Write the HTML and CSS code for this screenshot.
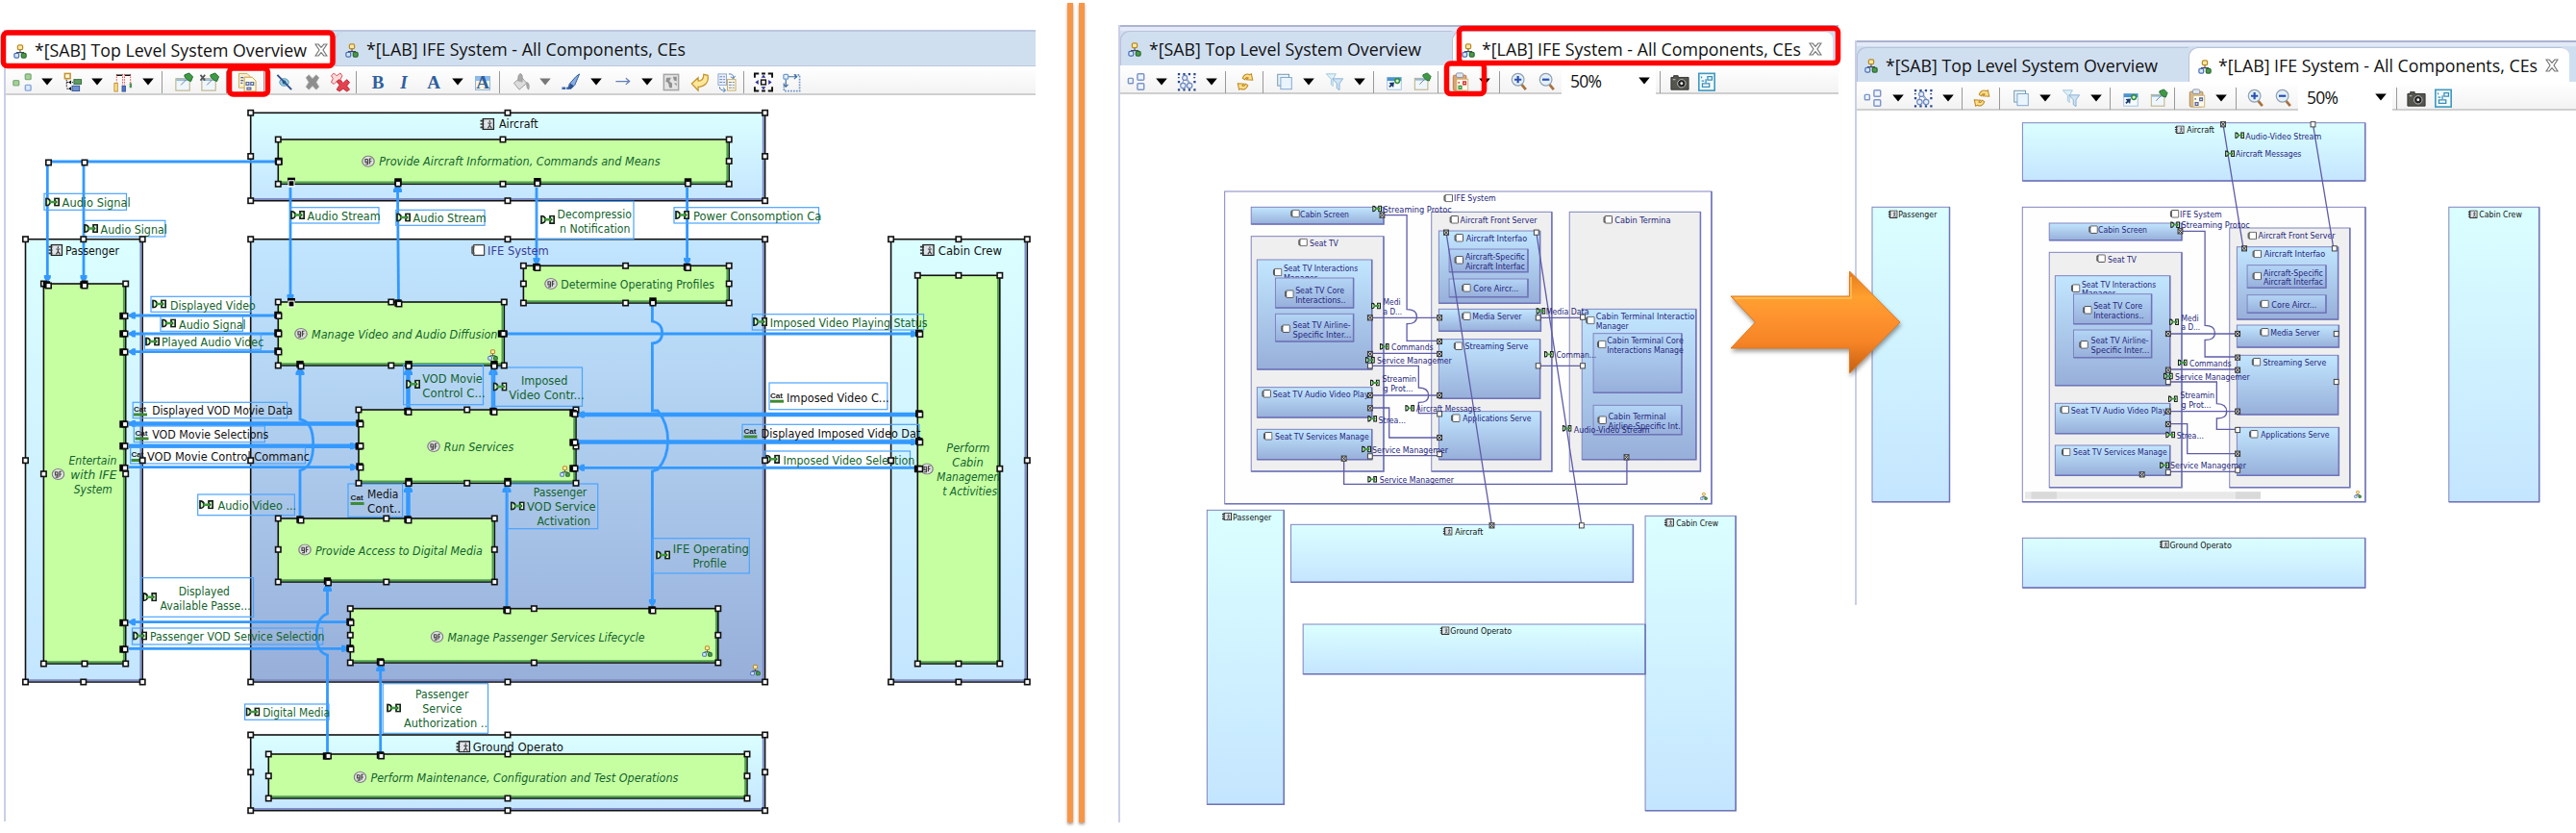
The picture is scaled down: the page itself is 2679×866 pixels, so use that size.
FILE: index.html
```html
<!DOCTYPE html>
<html lang="en">
<head>
<meta charset="utf-8">
<title>Diagram layout copy and paste</title>
<link rel="stylesheet" href="styles.css">
</head>
<body>
<svg class="sprite" aria-hidden="true">
  <defs>
    <linearGradient id="g-actor" x1="0" y1="0" x2="0" y2="1"><stop offset="0" stop-color="#dbffff"/><stop offset="1" stop-color="#c4e5ff"/></linearGradient>
    <linearGradient id="g-comp" x1="0" y1="0" x2="0" y2="1"><stop offset="0" stop-color="#c2e6ff"/><stop offset="1" stop-color="#97afd9"/></linearGradient>
    <linearGradient id="g-sub" x1="0" y1="0" x2="0" y2="1"><stop offset="0" stop-color="#b4d6f6"/><stop offset="1" stop-color="#97afdb"/></linearGradient>
    <linearGradient id="g-arrow" x1="0" y1="0" x2="0" y2="1"><stop offset="0" stop-color="#e8781a"/><stop offset=".25" stop-color="#ffa02f"/><stop offset=".4" stop-color="#ff9630"/><stop offset=".7" stop-color="#f68426"/><stop offset="1" stop-color="#c55f10"/></linearGradient>
    <marker id="tip" viewBox="0 0 8 8" refX="7" refY="4" markerWidth="8" markerHeight="8" markerUnits="userSpaceOnUse" orient="auto"><path d="M0 .5H3L8 4L3 7.5H0Z" fill="#3399ff"/></marker>
  </defs>
  <symbol id="i-tree" viewBox="0 0 16 16" preserveAspectRatio="none"><path d="M8 6v4M4 11V9h8v2" fill="none" stroke="#445" stroke-width="1.2"/><rect x="5" y="1" width="6" height="5" rx="1.5" fill="#ffe9a8" stroke="#b98a1e" stroke-width="1.4"/><rect x="1" y="10" width="5.5" height="5" rx="1.5" fill="#d5e6fa" stroke="#4a70b5" stroke-width="1.4"/><rect x="9.5" y="10" width="5.5" height="5" rx="1.5" fill="#4c9a4c" stroke="#2d6b2f" stroke-width="1.4"/></symbol>
  <symbol id="i-close" viewBox="0 0 14 14"><path d="M1 1h3.2L7 4.4 9.8 1H13L9 7l4 6H9.800L7 9.600 4.200 13H1L5 7Z" fill="#fff" stroke="#777" stroke-width="1.2"/></symbol>
  <symbol id="i-caret" viewBox="0 0 12 20"><path d="M0.200 6.500h11.600L6 13.500Z"/></symbol>
  <symbol id="i-nodes" viewBox="0 0 22 22"><g stroke-width="1.500"><rect x="1.500" y="9" width="6" height="5.500" rx="1" fill="#a8d09a" stroke="#7eb07a"/><rect x="14.500" y="2" width="6" height="6" rx="1" fill="#a8d09a" stroke="#7eb07a"/><rect x="14.500" y="14" width="6" height="6" rx="1" fill="#dce9fa" stroke="#86a7da"/></g></symbol>
  <symbol id="i-nodes2" viewBox="0 0 22 22"><g fill="#eef4fd" stroke="#7d96c8" stroke-width="1.600"><rect x="1.500" y="7" width="5.500" height="6" rx="1"/><rect x="12" y="2" width="7.500" height="7" rx="1"/><rect x="12" y="13" width="7.500" height="7" rx="1"/></g></symbol>
  <symbol id="i-hier" viewBox="0 0 22 22"><path d="M5 8v9M5 11h7M5 18h7" fill="none" stroke="#222" stroke-dasharray="2 1"/><path d="M7 11l3-2v4zM7 18l3-2v4z"/><rect x="3" y="1.500" width="6" height="5.500" fill="#fff8dc" stroke="#c3922d" stroke-width="1.600"/><rect x="13" y="8" width="8" height="5" fill="#5d9c61" stroke="#356e3b"/><rect x="11" y="15" width="8" height="5.500" fill="#6e93cf" stroke="#34539a"/></symbol>
  <symbol id="i-align" viewBox="0 0 22 22"><path d="M4 2v9M10.500 2v12M12.500 2v12M19 2v10" stroke="#f04040" stroke-dasharray="1.600 1.200"/><path d="M4 3.500h6M13 3.500h6" stroke="#111" stroke-width="1.600"/><rect x="1.500" y="12" width="3.500" height="9" fill="#ffe08a" stroke="#c09030"/><rect x="10" y="15" width="3.500" height="6" fill="#5578c5" stroke="#34539a"/><rect x="18" y="12" width="2.500" height="5" fill="#4d9350"/></symbol>
  <symbol id="i-pin" viewBox="0 0 22 22"><rect x="2.500" y="7" width="15" height="13" fill="#eef7fd" stroke="#b9a777"/><path d="M3 8.500h14" stroke="#8cb9df" stroke-width="2"/><path d="M8 14l6-6" stroke="#778"/><path d="M12 3l5-2 4 4-2 5-3-1-4-4z" fill="#3f9a45" stroke="#1d6b29"/></symbol>
  <symbol id="i-unpin" viewBox="0 0 22 22"><use href="#i-pin"/><path d="M1 3l5 6M6 3L1 9" stroke="#555" stroke-width="1.800"/></symbol>
  <symbol id="i-copy" viewBox="0 0 22 22"><path d="M2 1.500h9l3 3V17H2Z" fill="#f6efcf" stroke="#cda94f"/><path d="M8 5.500h8.500l4 4V21H8Z" fill="#fdf9e4" stroke="#c99f3d"/><path d="M4 6h3M4 9h3M4 12h2M10 11h3v3h-3zM15 11h3v3h-3zM11 17h4v2h-4z" fill="none" stroke="#5268a8" stroke-width="1.300"/></symbol>
  <symbol id="i-hide" viewBox="0 0 22 22"><ellipse cx="10.500" cy="11" rx="5" ry="4" fill="#9bd0e0" stroke="#5797b5"/><circle cx="10.500" cy="11" r="2" fill="#24617e"/><path d="M3 3l15.500 16" stroke="#2f4f93" stroke-width="2"/></symbol>
  <symbol id="i-x" viewBox="0 0 22 22"><path d="M4 6l3-3 4 4 4-4 3 3-3 5 3 5-3 3-4-4-4 4-3-3 3-5Z" fill="#8e8e8e" stroke="#a8a8a8"/></symbol>
  <symbol id="i-xx" viewBox="0 0 22 22"><path d="M1 4l3-3 3 3 4-3 2 3-2 4 2 3-3 2-3-3-3 3-3-2 2-4Z" fill="#fbdada" stroke="#d8454f"/><path d="M7 10l3-2 4 4 4-4 3 3-3 4 3 4-3 2-4-3-4 3-3-2 3-5Z" fill="#e2434e" stroke="#bf2b38"/></symbol>
  <symbol id="i-bucket" viewBox="0 0 22 22"><path d="M3 12l8-7 6 7-8 7Z" fill="#dcdcdc" stroke="#999"/><path d="M8 10c-1-6 1-9 3-8s1 6 1 9M17 11c3 1 3 5 2 8-2-2-2-4-2-8" fill="#aaa" stroke="#999"/></symbol>
  <symbol id="i-brush" viewBox="0 0 22 22"><path d="M1 17.500h4M6 18l3-1" stroke="#3a6ab0" stroke-width="2.500"/><path d="M20 2l-5 12-4 4H8l1-5 7-8Z" fill="#87aede" stroke="#2f5c9e"/><path d="M10 12l4 3-3 3H8z" fill="#2c5490"/></symbol>
  <symbol id="i-line" viewBox="0 0 22 22"><path d="M3 10h15M14 6.500l4 3.500-4 3.500" fill="none" stroke="#5e7fb8" stroke-width="1.300"/></symbol>
  <symbol id="i-pic" viewBox="0 0 22 22"><rect x="3" y="2.500" width="16" height="17" fill="#e4e4e4" stroke="#a5a5a5" stroke-width="1.600"/><path d="M6 6h5l-2 4 3 2v5H9l-1-5-3-2zM13 5h4v5l-3-1zM14 12h3v3z" fill="#909090"/></symbol>
  <symbol id="i-back" viewBox="0 0 22 22"><path d="M2 12.500L9 6v3.500c4 0 6-2 6-7l4.500 1C21 11 16 16 9 16v4Z" fill="#ffe79a" stroke="#c4932e" stroke-width="1.300"/></symbol>
  <symbol id="i-fmt" viewBox="0 0 22 22"><rect x="1.500" y="2" width="9" height="12" fill="#edf2fb" stroke="#8ea5cc"/><rect x="11.500" y="8" width="9" height="12" fill="#fff8df" stroke="#c2ab6a"/><path d="M3 5h6M3 8h6M3 11h6M13 11h6M13 14h6M13 17h6" stroke="#5d7fc0" stroke-dasharray="3 1"/><path d="M13 2c4 0 5 1 5 5M15 5l3 2 2-3M3 16c0 3 2 4 6 4M7 17l2.500 3L7 22" fill="none" stroke="#4277b8"/></symbol>
  <symbol id="i-auto" viewBox="0 0 22 22"><path d="M1.500 6V1.500H6M9 1.500h4M16 1.500h4.500V6M20.500 16v4.500H16M13 20.500H9M6 20.500H1.500V16" fill="none" stroke="#111" stroke-width="2"/><rect x="8.500" y="8.500" width="5" height="5" fill="#fff" stroke="#111" stroke-width="1.500"/><path d="M11 3l2.500 3h-5zM11 19l2.500-3h-5zM2 11l3.500-2.500v5zM20 11l-3.500-2.500v5z" fill="#2b2b9a"/></symbol>
  <symbol id="i-snap" viewBox="0 0 22 22"><path d="M3 12v8.500h17V3h-6" fill="none" stroke="#6f97c6" stroke-width="1.800" stroke-dasharray="1.800 1.300"/><rect x="2.500" y="2.500" width="5" height="5" rx="1" fill="#e4effb" stroke="#6b9ccc" stroke-width="1.300"/><path d="M8 5h9M14 2.500l3 2.500-3 2.500M5 8v8M2.500 13.500L5 16l2.500-2.500" fill="none" stroke="#3b6b9b" stroke-width="1.200"/></symbol>
  <symbol id="i-net" viewBox="0 0 22 22"><g fill="#27488c"><path d="M1 1h2.500v2.500H1zM7 1h2.500v2.500H7zM13 1h2.500v2.500H13zM19 1h2.500v2.500H19zM1 10h2.500v2.500H1zM19 10h2.500v2.500H19zM1 19h2.500v2.500H1zM7 19h2.500v2.500H7zM13 19h2.500v2.500H13zM19 19h2.500v2.500H19zM1 5.500h2V7H1zM19 5.500h2V7h-2z"/></g><path d="M8 7L6 14M9 7l7 8M11 7l6 8" stroke="#6985b8"/><g fill="#e7effb" stroke="#6e89c0" stroke-width="1.300"><circle cx="9" cy="6.500" r="2.800"/><circle cx="7" cy="15.500" r="3"/><circle cx="14.500" cy="15.500" r="3"/></g></symbol>
  <symbol id="i-refresh" viewBox="0 0 22 22"><path d="M8 7c1-4 5-6 8-4l2-1 1.500 7-7-.5 2-2c-2-1-3 0-4 2ZM14 15c-1 4-5 6-8 4l-2 1L2.500 13l7 .5-2 2c2 1 3 0 4-2Z" fill="#ffe08c" stroke="#c08a24" stroke-width="1.200"/></symbol>
  <symbol id="i-layers" viewBox="0 0 22 22"><rect x="3" y="2.500" width="13" height="13" fill="#eaf2f4" stroke="#6b93a8"/><rect x="6.500" y="6" width="12.500" height="13.500" fill="#e9f5fc" stroke="#7ba0ce"/></symbol>
  <symbol id="i-filter" viewBox="0 0 22 22"><path d="M1.500 2h11L9 8v8l-2-2V8Z" fill="#dff1f7" stroke="#9cc3dc"/><path d="M8.500 7.500h12L16.500 13v7.500l-3-2V13Z" fill="#cfe5f5" stroke="#86acd3"/></symbol>
  <symbol id="i-img" viewBox="0 0 22 22"><rect x="3" y="6" width="16" height="14" fill="#f8fbff" stroke="#9ec1de"/><path d="M3 6h16v4H3z" fill="#4a93cf"/><path d="M5 12l6-.500-1 6-1.800-1.800-2 2-1.500-1.500 2-2Z" fill="#1c3c70"/><circle cx="14.500" cy="10" r="2.600" fill="#d8f4cc" stroke="#2f8a3b" stroke-width="1.600"/></symbol>
  <symbol id="i-paste" viewBox="0 0 22 22"><rect x="2.500" y="3.500" width="15" height="17.500" rx="1.500" fill="#d8b888" stroke="#a98250"/><rect x="6" y="1" width="8" height="5" rx="1.500" fill="#dfe6ee" stroke="#8492a8"/><rect x="6.500" y="8" width="13" height="13" fill="#fffbe9" stroke="#c9b27a"/><path d="M9 11v2M9 16h3v3H9zM14 11h3v3h-3z" fill="none" stroke="#53669e" stroke-width="1.400"/></symbol>
  <symbol id="i-paste2" viewBox="0 0 22 22"><rect x="2.500" y="3.500" width="15" height="17.500" rx="1.500" fill="#dfa36e" stroke="#b47238"/><rect x="6" y="1" width="8" height="5" rx="1.500" fill="#dfe6ee" stroke="#8492a8"/><rect x="6.500" y="8" width="13" height="13" fill="#fffbe9" stroke="#c9b27a"/><path d="M9 11v2M14 11h3v3h-3z" fill="none" stroke="#d8323a" stroke-width="1.500"/><path d="M9 16h3v3H9z" fill="none" stroke="#2e9a40" stroke-width="1.500"/></symbol>
  <symbol id="i-zin" viewBox="0 0 22 22"><path d="M13.500 14l5 6" stroke="#a9713c" stroke-width="3"/><circle cx="9.500" cy="8.500" r="7" fill="#e3f0fb" stroke="#8fa0ad" stroke-width="1.300"/><path d="M5.500 8.500h8M9.500 4.500v8" stroke="#2a4fae" stroke-width="2.400"/></symbol>
  <symbol id="i-zout" viewBox="0 0 22 22"><path d="M13.500 14l5 6" stroke="#a9713c" stroke-width="3"/><circle cx="9.500" cy="8.500" r="7" fill="#e3f0fb" stroke="#8fa0ad" stroke-width="1.300"/><path d="M5.500 8.500h8" stroke="#2a4fae" stroke-width="2.400"/></symbol>
  <symbol id="i-cam" viewBox="0 0 22 22"><path d="M1 6h3V4h5v2h12v14H1Z" fill="#55554f" stroke="#2e2e2e"/><circle cx="13" cy="13" r="4.600" fill="#222" stroke="#ccc"/><circle cx="13" cy="13" r="1.600" fill="#eee"/><path d="M3 8.500h3" stroke="#ccc"/></symbol>
  <symbol id="i-dia" viewBox="0 0 22 22"><rect x="2" y="1.500" width="18" height="19.500" fill="#f3fbff" stroke="#3f9abf" stroke-width="1.800"/><path d="M5 5v2M5 10h3M12 5h5v4h-5zM10 12V8M6 13h8v4H6z" fill="none" stroke="#3a8db5" stroke-width="1.400"/></symbol>
  <!-- diagram element icons -->
  <symbol id="d-port" viewBox="0 0 15 10" preserveAspectRatio="none"><path d="M1 1v8C6.500 9 6.500 1 1 1ZM14.200 1H10v2.500L11.500 5 10 6.500V9h4.200Z" fill="#d4f5c4" stroke="#15201a" stroke-width="1.700"/><path d="M4.500 5h7" stroke="#3d9a3a" stroke-width="2.600"/></symbol>
  <symbol id="d-fn" viewBox="0 0 14 14" preserveAspectRatio="none"><circle cx="7" cy="7" r="6.200" fill="#e2e2e2" stroke="#808080" stroke-width="1.300"/><path d="M6.500 4.500H4v3.500h2.500V4.500V10.500H4.200M8.500 10V4h2M8 7h2.500" fill="none" stroke="#444" stroke-width="1.200"/></symbol>
  <symbol id="d-actor" viewBox="0 0 15 13" preserveAspectRatio="none"><rect x="3" y=".8" width="11.200" height="11.400" fill="#dfe4ea" stroke="#222" stroke-width="1.400"/><path d="M0 3h4M0 6.500h4M0 10h4" stroke="#333" stroke-width="1.800"/><path d="M10 2.500v2M8 5.500h4M10 5v3l-2 3M10 8l2 3" stroke="#444" fill="none" stroke-width="1.200"/></symbol>
  <symbol id="d-comp" viewBox="0 0 15 13" preserveAspectRatio="none"><rect x="3" y=".8" width="11.200" height="11.400" rx="1" fill="#fff" stroke="#444" stroke-width="1.400"/><path d="M1 3h3M1 6.500h2M1 10h3M1.500 3v7" stroke="#555" stroke-width="1.600"/></symbol>
</svg>

<main class="stage">
  <section class="panel panel-source">
    <div class="tabs">
      <div class="tab active"><svg class="tab-icon"><use href="#i-tree"/></svg><svg class="tab-label sab"><text x="0" y="21" textLength="283" lengthAdjust="spacingAndGlyphs">*[SAB] Top Level System Overview</text></svg><svg class="tab-close"><use href="#i-close"/></svg></div>
      <div class="tab"><svg class="tab-icon"><use href="#i-tree"/></svg><svg class="tab-label lab"><text x="0" y="21" textLength="332" lengthAdjust="spacingAndGlyphs">*[LAB] IFE System - All Components, CEs</text></svg></div>
    </div>
    <div class="toolbar toolbar-edit">
      <svg class="ic"><use href="#i-nodes"/></svg><svg class="caret"><use href="#i-caret"/></svg>
      <svg class="ic"><use href="#i-hier"/></svg><svg class="caret"><use href="#i-caret"/></svg>
      <svg class="ic"><use href="#i-align"/></svg><svg class="caret"><use href="#i-caret"/></svg>
      <i class="sep"></i>
      <svg class="ic"><use href="#i-pin"/></svg><svg class="ic"><use href="#i-unpin"/></svg>
      <i class="sep"></i><svg class="ic"><use href="#i-copy"/></svg><i class="sep"></i>
      <svg class="ic"><use href="#i-hide"/></svg><svg class="ic"><use href="#i-x"/></svg><svg class="ic"><use href="#i-xx"/></svg>
      <i class="sep"></i>
      <span class="glyph bold">B</span><span class="glyph italic">I</span><span class="glyph">A</span><svg class="caret"><use href="#i-caret"/></svg><span class="glyph boxed">A</span>
      <i class="sep"></i>
      <svg class="ic"><use href="#i-bucket"/></svg><svg class="caret off"><use href="#i-caret"/></svg>
      <svg class="ic"><use href="#i-brush"/></svg><svg class="caret"><use href="#i-caret"/></svg>
      <svg class="ic"><use href="#i-line"/></svg><svg class="caret"><use href="#i-caret"/></svg>
      <svg class="ic"><use href="#i-pic"/></svg><svg class="ic"><use href="#i-back"/></svg><svg class="ic"><use href="#i-fmt"/></svg>
      <i class="sep"></i>
      <svg class="ic"><use href="#i-auto"/></svg><svg class="ic"><use href="#i-snap"/></svg>
    </div>
    <svg class="canvas" id="source" viewBox="6 99 1071 755"></svg>
  </section>

  <div class="dividers"><i></i><i></i></div>

  <section class="panel panel-target">
    <div class="tabs">
      <div class="tab"><svg class="tab-icon"><use href="#i-tree"/></svg><svg class="tab-label sab"><text x="0" y="21" textLength="283" lengthAdjust="spacingAndGlyphs">*[SAB] Top Level System Overview</text></svg></div>
      <div class="tab active"><svg class="tab-icon"><use href="#i-tree"/></svg><svg class="tab-label lab"><text x="0" y="21" textLength="332" lengthAdjust="spacingAndGlyphs">*[LAB] IFE System - All Components, CEs</text></svg><svg class="tab-close"><use href="#i-close"/></svg></div>
    </div>
    <div class="toolbar toolbar-view">
      <svg class="ic"><use href="#i-nodes2"/></svg><svg class="caret"><use href="#i-caret"/></svg>
      <svg class="ic"><use href="#i-net"/></svg><svg class="caret"><use href="#i-caret"/></svg>
      <i class="sep"></i><svg class="ic"><use href="#i-refresh"/></svg><i class="sep"></i>
      <svg class="ic"><use href="#i-layers"/></svg><svg class="caret"><use href="#i-caret"/></svg>
      <svg class="ic"><use href="#i-filter"/></svg><svg class="caret"><use href="#i-caret"/></svg>
      <i class="sep"></i>
      <svg class="ic"><use href="#i-img"/></svg><svg class="ic"><use href="#i-pin"/></svg>
      <i class="sep"></i>
      <svg class="ic"><use href="#i-paste2"/></svg><svg class="caret"><use href="#i-caret"/></svg>
      <i class="sep"></i>
      <svg class="ic"><use href="#i-zin"/></svg><svg class="ic"><use href="#i-zout"/></svg>
      <div class="zoom"><span>50%</span><svg class="caret"><use href="#i-caret"/></svg></div>
      <i class="sep"></i>
      <svg class="ic"><use href="#i-cam"/></svg><svg class="ic"><use href="#i-dia"/></svg>
    </div>
    <svg class="canvas" id="target" viewBox="1165 98 747 757"></svg>
  </section>

  <section class="panel panel-result">
    <div class="tabs">
      <div class="tab"><svg class="tab-icon"><use href="#i-tree"/></svg><svg class="tab-label sab"><text x="0" y="21" textLength="283" lengthAdjust="spacingAndGlyphs">*[SAB] Top Level System Overview</text></svg></div>
      <div class="tab active"><svg class="tab-icon"><use href="#i-tree"/></svg><svg class="tab-label lab"><text x="0" y="21" textLength="332" lengthAdjust="spacingAndGlyphs">*[LAB] IFE System - All Components, CEs</text></svg><svg class="tab-close"><use href="#i-close"/></svg></div>
    </div>
    <div class="toolbar toolbar-view">
      <svg class="ic"><use href="#i-nodes2"/></svg><svg class="caret"><use href="#i-caret"/></svg>
      <svg class="ic"><use href="#i-net"/></svg><svg class="caret"><use href="#i-caret"/></svg>
      <i class="sep"></i><svg class="ic"><use href="#i-refresh"/></svg><i class="sep"></i>
      <svg class="ic"><use href="#i-layers"/></svg><svg class="caret"><use href="#i-caret"/></svg>
      <svg class="ic"><use href="#i-filter"/></svg><svg class="caret"><use href="#i-caret"/></svg>
      <i class="sep"></i>
      <svg class="ic"><use href="#i-img"/></svg><svg class="ic"><use href="#i-pin"/></svg>
      <i class="sep"></i>
      <svg class="ic"><use href="#i-paste"/></svg><svg class="caret"><use href="#i-caret"/></svg>
      <i class="sep"></i>
      <svg class="ic"><use href="#i-zin"/></svg><svg class="ic"><use href="#i-zout"/></svg>
      <div class="zoom"><span>50%</span><svg class="caret"><use href="#i-caret"/></svg></div>
      <i class="sep"></i>
      <svg class="ic"><use href="#i-cam"/></svg><svg class="ic"><use href="#i-dia"/></svg>
    </div>
    <svg class="canvas" id="result" viewBox="1931 115 748 514"></svg>
  </section>
</main>

<svg class="overlay" viewBox="0 0 2679 866">
  <g class="callout">
    <rect x="3.500" y="34" width="342.500" height="34.500" rx="4"/>
    <rect x="238.500" y="71" width="40" height="27" rx="4"/>
    <rect x="1517.500" y="29.500" width="394" height="36" rx="4"/>
    <rect x="1504.500" y="66" width="39" height="31.500" rx="4"/>
  </g>
  <path class="big-arrow" d="M1800 308H1923.500V282L1976 335L1923.500 388V362H1800L1825.500 335Z"/>
  <path class="shine" d="M1804 310H1925V288"/>
</svg>
<script src="diagram.js"></script>
</body>
</html>
```
FILE: styles.css
```css
body {
  margin: 0;
  background: #fff;
  width: 2679px;
  height: 866px;
  overflow: hidden;
  position: relative;
  font-family: "Open Sans", "Noto Sans", sans-serif;
}
.sprite { position: absolute; width: 0; height: 0; }
.stage { display: flex; align-items: flex-start; }

.panel { display: flex; flex-direction: column; flex: none; box-sizing: border-box; border-left: 2px solid #c9cfe8; background: #fff; }
.panel-source { width: 1073px; height: 823px; margin: 31px 0 0 4px; }
.panel-target { width: 749px; height: 829px; margin: 26px 0 0 35px; }
.panel-result { width: 750px; height: 587px; margin: 42px 0 0 17px; }

.tabs { display: flex; flex: none; box-sizing: border-box; height: 42px; border-top: 2px solid #abb3d0; padding-top: 4px; background: linear-gradient(#e3e9f6 4px, #d0dff0 4px); }
.panel-source .tabs { height: 38px; padding-top: 0; border-top-color: #bcc7e0; background: #d0dfef; border-bottom: 1px solid #b9c6de; }
.panel-result .tabs { height: 43px; padding-top: 5px; }
.tab { display: flex; align-items: center; box-sizing: border-box; padding-left: 8px; width: 345px; border-top-left-radius: 9px; box-shadow: inset 1px 1px #b9c1dc; }
.tab.active { background: #fff; width: 396px; padding-left: 10px; border-top-right-radius: 9px; }
.panel-source .tab { box-shadow: none; width: auto; padding-left: 9px; border-left: 2px solid #c2cce2; height: 35px; }
.panel-source .tab.active { width: 342px; height: 36px; padding-left: 8px; border: 0; border-radius: 0; }
.tab-icon { width: 14px; height: 15px; margin: 4px 8px 0 0; }
.tab:not(.active) .tab-icon { margin-top: 3px; }
.panel-target .active .tab-icon, .panel-result .active .tab-icon { margin-right: 7px; }
.tab-label { height: 27px; overflow: visible; font-size: 18px; fill: #111; }
.tab-label.sab { width: 283px; }
.tab-label.lab { width: 332px; }
.tab.active .tab-close { width: 14px; height: 14px; margin: 2px 0 0 8px; }

.toolbar { display: grid; flex: none; align-items: center; justify-items: start; box-sizing: border-box; height: 30px; padding: 4px 0 0 7px; border-bottom: 2px solid #cfcfcf; background: linear-gradient(#fff, #f3f3f3); }
.toolbar-edit { padding-left: 6px; grid-template-columns: 31px 21px 31px 22px 31px 20px 12px 27px 28px 11px 28px 11px 29px 29px 27px 12px 27px 31px 30px 21px 28px 12px 30px 22px 31px 23px 30px 20px 30px 28px 28px 10px 29px 22px; }
.toolbar-view { grid-template-columns: 30px 22px 30px 20px 11px 28px 13px 29px 23px 30px 20px 12px 29px 26px 14px 29px 21px 11px 29px 25px 102px 11px 28px 20px; }
.ic { width: 22px; height: 21px; }
.toolbar-view .ic { width: 20px; height: 20px; }
.caret { width: 12px; height: 20px; fill: #000; }
.caret.off { fill: #777; }
.sep { width: 1px; height: 23px; background: #999; }
.glyph { width: 22px; height: 21px; line-height: 21px; text-align: center; font: bold 19px/21px "Liberation Serif", serif; color: #2f5f9e; }
.glyph.italic { font-style: italic; }
.glyph.boxed { width: 16px; height: 15px; line-height: 14px; margin: 2px 0 0 3px; background: linear-gradient(#8cbcf0 5px, #fff6d8 5px); box-shadow: inset 0 0 0 1px #8db4e2; }
.zoom { display: flex; align-items: center; justify-content: space-between; align-self: start; box-sizing: border-box; width: 98px; height: 30px; margin-top: -4px; padding: 2px 6px 0 9px; background: #fff; font-size: 17.500px; color: #111; }
.zoom span { letter-spacing: -.8px; }

.canvas { display: block; flex: 1; min-height: 0; width: 100%; overflow: visible; }
.dividers { display: flex; flex: none; gap: 6px; margin: 3px 0 0 33px; }
.dividers i { width: 6px; height: 852px; background: #f79646; box-shadow: 0 2px 3px rgba(90, 60, 40, .5); }

.overlay { position: absolute; left: 0; top: 0; width: 2679px; height: 866px; pointer-events: none; }
.callout rect { fill: none; stroke: #f00; stroke-width: 5.500; }
.big-arrow { fill: url(#g-arrow); stroke: #e07a1c; stroke-width: 1; filter: drop-shadow(1px 3px 2px rgba(60, 60, 60, .5)); }
.shine { fill: none; stroke: #ffc15a; stroke-width: 2; opacity: .8; }

.cat { font: bold 8px "Liberation Sans", sans-serif; fill: #222; }
.cat-bar { fill: #3f8a35; }

.t { font-family: "DejaVu Sans Condensed", "DejaVu Sans", sans-serif; font-size: 12.200px; fill: #111; }
.t.small { font-size: 8.900px; }
.t.green { fill: #14632d; }
.t.it { font-style: italic; }
.t.violet { fill: #3c3c96; }
.t.ink { fill: #26267c; }
.node { stroke: #111; stroke-width: 1.600; }
.node.fn { fill: #c6ffa2; }
.node.actor { fill: url(#g-actor); }
.node.comp { fill: url(#g-comp); }
.edge-shade { fill: none; stroke-width: 2; }
.edge-shade.fn { stroke: #4f9f50; }
.edge-shade.actor, .edge-shade.comp { stroke: #7d8cc4; }
.flow { fill: none; stroke: #3399ff; stroke-width: 2.800; }
.flow.thick { stroke-width: 4.500; }
.flow-tip { fill: #3399ff; }
.label-box { fill: none; stroke: #4aa3ff; stroke-width: 1.200; }
.handle { fill: #fff; stroke: #111; stroke-width: 1.600; }
.port-block { fill: #000; }
.port-gap { fill: #fff; }
.box { stroke: #8184c0; stroke-width: 1; }
.box.white { fill: #fefefe; }
.box.grey { fill: #efefef; }
.box.actor { fill: url(#g-actor); }
.box.comp { fill: url(#g-comp); }
.box.sub { fill: url(#g-sub); }
.box-shade { fill: none; stroke: #6f74ba; stroke-width: 1.500; }
.link { fill: none; stroke: #5f5ca8; stroke-width: 1.300; }
.pin { fill: #fff; stroke: #444; stroke-width: 1; }
.pin-x { stroke: #333; stroke-width: 1; fill: #ddd; }
.scroll { fill: #e8e8e8; }
.scroll-end { fill: #d9d9d9; }
```
FILE: diagram.js
```javascript
const el = (tag, attrs, text) => {
  const n = document.createElementNS('http://www.w3.org/2000/svg', tag);
  for (const k in attrs) n.setAttribute(k, attrs[k]);
  if (text !== undefined) n.textContent = text;
  return n;
};

function icon(svg, id, x, cy, w, h) {
  svg.append(el('use', { href: '#' + id, x, y: cy - h / 2, width: w, height: h }));
}

// Exchange category icon: a "Cat" caption over a green bar.
function category(svg, x, cy) {
  svg.append(el('text', { class: 'cat', x, y: cy + 1, textLength: 13, lengthAdjust: 'spacingAndGlyphs' }, 'Cat'));
  svg.append(el('rect', { class: 'cat-bar', x, y: cy + 3, width: 14, height: 3 }));
}

// Text stretched between x1 and x2 on the given baseline.
function text(svg, s, x1, x2, y, cls) {
  svg.append(el('text', { x: x1, y, textLength: x2 - x1, lengthAdjust: 'spacingAndGlyphs', class: 't ' + cls }, s));
}

/* ---- Selected system architecture diagram ---- */
const src = document.getElementById('source');

// kind, left, top, right, bottom, middle x, middle y
const nodes = [
  ['actor', 260.7, 117.3, 795.6, 208.7, 528, 162.5],
  ['fn', 289.3, 145, 758.2, 191.3, 523, 167.5],
  ['comp', 260.7, 248.7, 795.6, 709, 528, 478.7],
  ['fn', 544.4, 276.3, 758.2, 315, 650.6, 295],
  ['fn', 289.3, 314, 524.3, 380, 406.8, 347],
  ['fn', 373, 426, 599, 502.3, 485.7, 464],
  ['fn', 289.3, 539, 514.3, 605, 401.8, 571.3],
  ['fn', 364.3, 632.7, 746.8, 689, 555.4, 660.3],
  ['actor', 260.7, 764, 795.6, 842.7, 528, 802.7],
  ['fn', 279.3, 784, 777, 830, 528, 806.7],
  ['actor', 26.5, 248.7, 148.2, 709, 86.8, 478.7],
  ['fn', 45.4, 295, 130.7, 690, 88, 492.7],
  ['actor', 926.6, 248.7, 1068.3, 709, 996.9, 478.7],
  ['fn', 954.3, 286.3, 1039.8, 690, 996.9, 487.3]
];
for (const [k, x, y, r, b] of nodes) {
  src.append(el('rect', { class: 'node ' + k, x, y, width: r - x, height: b - y }));
  src.append(el('path', { class: 'edge-shade ' + k, d: `M${x + 1} ${b - 1.8}H${r - 1.8}V${y + 1}` }));
}

// path, direction of the tip (1 end, -1 start), thick
const flows = [
  ['M290 168H49.300V293', 1], ['M87 168V293', 1],
  ['M302 195V313', 1], ['M413.500 194L414.500 313', -1],
  ['M558 195V275', 1], ['M714.600 195V275', 1],
  ['M678.400 318V334Q688.600 336 688.600 346T678.400 357V427H684Q694.600 440 694.600 458T684 488L678.400 490V630', 1],
  ['M289 328H134', 1], ['M289 347H134', 1], ['M289 365.700H134', 1],
  ['M527 347H954', 1],
  ['M312 384V436Q325.700 438 325.700 462T312 489V539', -1],
  ['M424.500 384V426', -1, 1], ['M513 384V426', -1, 1],
  ['M370 440.500H134', 1, 1], ['M134 463.700H371', 1, 1], ['M134 485.700H371', 1],
  ['M954 431H601', 1, 1], ['M601 459.500H954', 1, 1], ['M954 486.300H601', 1],
  ['M424.500 506V540', -1, 1], ['M527 506V633', -1],
  ['M364 646.700H134', 1], ['M134 674.300H362', 1],
  ['M340.500 609V638Q329.300 642 329.300 660T340.500 681V784', -1],
  ['M395.700 692V784', -1]
];
for (const [d, dir, thick] of flows) {
  const p = el('path', { class: 'flow' + (thick ? ' thick' : ''), d });
  if (dir > 0) p.setAttribute('marker-end', 'url(#tip)');
  src.append(p);
  if (dir < 0) {
    const [, x, y] = d.match(/M([\d.]+) ([\d.]+)/);
    src.append(el('path', { class: 'flow-tip', d: `M${+x - 4.5} ${+y + 6}V${+y + 3}L${x} ${+y - 3}L${+x + 4.5} ${+y + 3}V${+y + 6}Z` }));
  }
}

const titles = [
  ['d-actor', 499.3, 129, 'Aircraft', 519, 559.6, 133.3, ''],
  ['d-fn', 376, 167.7, 'Provide Aircraft Information, Commands and Means', 394.3, 686.5, 172.3, 'green it'],
  ['d-comp', 489.5, 260, 'IFE System', 507, 570.7, 265, 'violet'],
  ['d-fn', 566, 295, 'Determine Operating Profiles', 583.3, 743, 300, 'green'],
  ['d-fn', 306, 347, 'Manage Video and Audio Diffusion', 324, 517.5, 351.7, 'green it'],
  ['d-fn', 444, 464, 'Run Services', 461.8, 534.3, 468.7, 'green it'],
  ['d-fn', 310, 571.5, 'Provide Access to Digital Media', 327.9, 501.8, 576.7, 'green it'],
  ['d-fn', 447.5, 662, 'Manage Passenger Services Lifecycle', 465.4, 670.6, 666.7, 'green it'],
  ['d-actor', 474.3, 776.3, 'Ground Operato', 491.8, 585.9, 781.3, ''],
  ['d-fn', 367.5, 808, 'Perform Maintenance, Configuration and Test Operations', 385.4, 705.4, 813, 'green it'],
  ['d-actor', 50.4, 260, 'Passenger', 67.9, 124, 265, ''],
  ['d-fn', 53.5, 493, 'Entertain', 71.4, 121.4, 483, 'green it'],
  [null, 0, 0, 'with IFE', 73.2, 121.4, 498, 'green it'],
  [null, 0, 0, 'System', 76.8, 116.8, 513, 'green it'],
  ['d-actor', 956.9, 260, 'Cabin Crew', 975.8, 1042, 265, ''],
  ['d-fn', 957, 487.5, 'Perform', 984.3, 1029.4, 470.3, 'green it'],
  [null, 0, 0, 'Cabin', 990.2, 1022.7, 485.3, 'green it'],
  [null, 0, 0, 'Managemen', 974.3, 1040, 500.3, 'green it'],
  [null, 0, 0, 't Activities', 980.2, 1037, 515.3, 'green it']
];
for (const [ic, ix, cy, s, x1, x2, y, cls] of titles) {
  if (ic) icon(src, ic, ix, cy, ic === 'd-fn' ? 14 : 15, 12.5);
  text(src, s, x1, x2, y, cls);
}

// box, icon kind, icon x, icon centre y, lines [text, x1, x2, baseline]
const D = 'd-port', C = 'category';
const labels = [
  [[46, 201.3, 131.5, 218.3], D, 47, 210, [['Audio Signal', 64.6, 135.7, 215]]],
  [[86.8, 229.3, 171.8, 246], D, 87, 237.5, [['Audio Signal', 104.6, 173.9, 242.7]]],
  [[302, 215.7, 394, 232], D, 302, 223.5, [['Audio Stream', 319.6, 395.7, 229]]],
  [[411.8, 218.3, 504, 234.3], D, 412, 226, [['Audio Stream', 429.6, 505.7, 231.3]]],
  [[558, 209.3, 659, 248.3], D, 562, 228.3, [['Decompressio', 579.6, 656.9, 226.7], ['n Notification', 582, 655.4, 241.7]]],
  [[701, 215.7, 851.5, 232], D, 702, 223.5, [['Power Consomption Ca', 720.9, 854.4, 229]]],
  [[157, 308.3, 261, 324.3], D, 158, 316, [['Displayed Video', 177, 265.7, 321.7]]],
  [[167, 328.7, 252.5, 344.3], D, 168, 336, [['Audio Signal', 186, 255.7, 341.7]]],
  [[150.4, 347.3, 271.4, 363.3], D, 151, 355, [['Played Audio Videc', 167.9, 274.3, 360.3]]],
  [[419.6, 379.3, 502.5, 420.7], D, 422, 399.3, [['VOD Movie', 439.3, 501.8, 397.7], ['Control C...', 439.3, 504.6, 412.7]]],
  [[512.5, 382, 605.5, 422.3], D, 512.5, 402, [['Imposed', 542, 590.3, 400], ['Video Contr...', 529.3, 607.7, 415]]],
  [[782.3, 326.7, 960.6, 343], D, 783, 334.5, [['Imposed Video Playing Status', 800.8, 964.6, 340.3]]],
  [[800, 398, 922.9, 425.7], C, 801, 412.7, [['Imposed Video C...', 818, 924.7, 418]]],
  [[138.2, 418.3, 298.6, 434.7], C, 139, 426.5, [['Displayed VOD Movie Data', 158.2, 304.3, 431.3]]],
  [[139.3, 443, 275.4, 459.7], C, 140.5, 451.5, [['VOD Movie Selections', 158.2, 279.3, 456.3]]],
  [[135.7, 465.3, 317.5, 482], C, 136.5, 474, [['VOD Movie Control Commanc', 152.9, 322, 479]]],
  [[772, 441.3, 956, 457.3], C, 773.4, 449.5, [['Displayed Imposed Video Dat', 791.5, 957.3, 455.3]]],
  [[795.2, 469, 946.5, 485.3], D, 796, 477.3, [['Imposed Video Selection', 814.5, 951.3, 483]]],
  [[205.7, 514, 306.4, 535.7], D, 207, 524.7, [['Audio Video ...', 226.4, 308.2, 530.3]]],
  [[362, 503, 418.6, 537.3], C, 364.6, 519, [['Media', 382, 414.3, 518], ['Cont..', 382, 417, 533]]],
  [[528, 503, 621.7, 549.7], D, 530.7, 526, [['Passenger', 554.8, 610.3, 516.3], ['VOD Service', 548, 619.5, 531.3], ['Activation', 558.5, 614, 546.3]]],
  [[678.7, 559.7, 779.3, 596], D, 682, 577, [['IFE Operating', 699.8, 779, 575], ['Profile', 720.5, 755.7, 590]]],
  [[146.8, 600.7, 263.6, 641.3], D, 148.2, 620.7, [['Displayed', 185.7, 239, 619], ['Available Passe...', 166.4, 260.7, 634]]],
  [[137.5, 653, 335.7, 670], D, 138, 661, [['Passenger VOD Service Selection', 156, 337.5, 666]]],
  [[254.6, 732, 342, 748.3], D, 255.4, 740, [['Digital Media', 273.2, 342.9, 745]]],
  [[398.2, 710.7, 507.5, 762.3], D, 402, 736, [['Passenger', 432, 487.5, 726.3], ['Service', 439.3, 480.4, 741.3], ['Authorization ..', 420, 507, 756.3]]]
];
for (const [[x, y, r, b], ic, ix, cy, lines] of labels) {
  src.append(el('rect', { class: 'label-box', x, y, width: r - x, height: b - y }));
  if (ic === D) icon(src, D, ix, cy, 15, 9.5);
  else category(src, ix, cy);
  for (const [s, x1, x2, by] of lines) text(src, s, x1, x2, by, ic === D ? 'green' : '');
}
for (const [x, y] of [[507, 369], [582, 490], [730, 677], [780, 696.7]]) icon(src, 'i-tree', x, y, 11, 12);

const handle = (x, y) => src.append(el('rect', { class: 'handle', x: x - 2.7, y: y - 2.7, width: 5.4, height: 5.4 }));
for (const [, x, y, r, b, mx, my] of nodes)
  for (const [hx, hy] of [[x, y], [mx, y], [r, y], [x, my], [r, my], [x, b], [mx, b], [r, b]]) handle(hx, hy);
handle(50.5, 169); handle(88, 169);

// x, y, offset of the port block under the handle
const ports = [
  [290, 168.5, 0, -1], [414, 191, 0, -2], [558.9, 190.7, 0, -2], [715.5, 191, 0, -2],
  [415, 316, -1, -1], [558.9, 278.5, -1, -1], [715.5, 278.5, -1, -1], [679, 315, 0, -2], [679, 635, -1, -1],
  [50.5, 297, -2, -1], [88, 297, -1, -1],
  [130, 328.5, -2, 0], [130, 347, -2, 0], [130, 366, -2, 0], [130, 441, -2, 0], [130, 463.7, -2, 0], [130, 486.5, -2, 0], [130, 647.5, -2, 0], [130, 675, -2, 0],
  [290, 328.5, -1, -1], [290, 347, -1, -1], [290, 366, -1, -1], [523.5, 347, -2, 0], [956.8, 347.5, -1, -1],
  [313, 380.7, -1, -2], [425, 380.7, 0, -2], [514, 380.7, 0, -2], [425, 428.5, -1, -1], [514, 428.5, -1, -1],
  [375, 441, -1, -1], [375, 463.7, -1, 0], [375, 486, -1, -1],
  [598, 430.5, -2, -1], [598, 460, -2, 0], [598, 487, -2, 0], [956.8, 431, -1, -1], [956.8, 459.8, -1, -1], [956.8, 487.5, -2, 0],
  [425, 502.5, 0, -2], [528, 502.5, 0, -2], [313, 541, -1, -1], [425, 541, -1, -1], [528, 635, -1, -1],
  [341.5, 606, -1, -2], [365, 647.5, -1, -1], [365, 675, -1, -1], [396.5, 689, -1, -1], [341.5, 786, -2, 0], [396.5, 786, -1, -1]
];
for (const [x, y, dx, dy] of ports) {
  src.append(el('rect', { class: 'port-block', x: x - 3.7 + dx, y: y - 3.7 + dy, width: 7.4, height: 7.4 }));
  handle(x, y);
}
for (const [x, y] of [[303, 190.7], [303, 316]]) {
  src.append(el('rect', { class: 'port-block', x: x - 4, y: y - 6, width: 8, height: 4 }));
  src.append(el('rect', { class: 'port-gap', x: x - 3.5, y: y - 3.5, width: 7, height: 7 }));
  src.append(el('rect', { class: 'port-block', x: x - 2.4, y: y - 2.4, width: 4.8, height: 4.8 }));
}

/* ---- Logical architecture diagrams at 50% zoom ---- */
const K = 1 / 2.6133, V = 1 / 3;

function logical(svg, ox, oy) {
  const X = x => ox + x * K, Y = y => oy + y * V;
  return {
    box(k, x, y, r, b) {
      svg.append(el('rect', { class: 'box ' + k, x: X(x), y: Y(y), width: (r - x) * K, height: (b - y) * V }));
      svg.append(el('path', { class: 'box-shade', d: `M${X(x)} ${Y(b)}H${X(r)}V${Y(y)}` }));
    },
    title(ic, ix, cy, lines, cls = 'ink') {
      icon(svg, ic, X(ix), Y(cy), 10, ic === D ? 7 : 8.6);
      for (const [s, a, b, y] of lines) text(svg, s, X(a), X(b), Y(y), 'small ' + cls);
    },
    link(pts) {
      svg.append(el('path', { class: 'link', d: pts.map((p, i) =>
        p.length === 3 ? `Q${X(p[2])} ${Y(p[1] - 45)} ${X(p[2])} ${Y(p[1] - 22)}T${X(p[0])} ${Y(p[1])}` :
        `${i ? 'L' : 'M'}${X(p[0])} ${Y(p[1])}`).join('') }));
    },
    pin(x, y, crossed) {
      const a = X(x), b = Y(y);
      svg.append(el('rect', { class: crossed ? 'pin-x' : 'pin', x: a - 2.4, y: b - 2.6, width: 4.8, height: 5.2 }));
      if (crossed) svg.append(el('path', { class: 'pin-x', d: `M${a - 2.4} ${b - 2.6}l4.800 5.200M${a + 2.4} ${b - 2.6}l-4.800 5.200` }));
    },
    tree(x, y) { icon(svg, 'i-tree', X(x) - 4, Y(y), 8, 8); }
  };
}

const I = 'd-comp', A = 'd-actor';
const shared = [
  ['comp', 160, 106, 520, 159, 266, 126, [['Cabin Screen', 293, 426, 137]]],
  ['grey', 160, 197, 520, 930, 287, 216, [['Seat TV', 319, 397, 228]]],
  ['comp', 176, 270, 488, 612, 218, 309, [['Seat TV Interactions', 248, 450, 306], ['Manager', 248, 340, 335]]],
  ['sub', 226, 327, 438, 420, 250, 377, [['Seat TV Core', 280, 413, 374], ['Interactions..', 280, 417, 404]]],
  ['sub', 226, 439, 438, 525, 240, 485, [['Seat TV Airline-', 273, 430, 482], ['Specific Inter...', 273, 432, 512]]],
  ['comp', 176, 668, 488, 762, 188, 688, [['Seat TV Audio Video Play', 219, 480, 699]]],
  ['comp', 176, 799, 488, 893, 192, 820, [['Seat TV Services Manage', 225, 480, 830]]],
  ['grey', 650, 121, 977, 930, 698, 145, [['Aircraft Front Server', 728, 937, 155]]],
  ['comp', 670, 180, 945, 406, 711, 202, [['Aircraft Interfao', 744, 910, 212]]],
  ['sub', 698, 237, 912, 308, 711, 271, [['Aircraft-Specific', 742, 904, 270], ['Aircraft Interfac', 742, 904, 299]]],
  ['sub', 698, 330, 912, 386, 731, 358, [['Core Aircr...', 764, 887, 369]]],
  ['comp', 670, 424, 947, 493, 731, 446, [['Media Server', 761, 895, 456]]],
  ['comp', 670, 518, 945, 703, 709, 539, [['Streaming Serve', 741, 913, 550]]],
  ['comp', 670, 743, 947, 893, 702, 764, [['Applications Serve', 735, 921, 775]]]
];
const terminal = [
  ['grey', 1025, 121, 1381, 930, 1116, 145, [['Cabin Termina', 1148, 1300, 155]]],
  ['comp', 1059, 424, 1369, 893, 1068, 459, [['Cabin Terminal Interactio', 1097, 1365, 456], ['Manager', 1097, 1186, 486]]],
  ['sub', 1090, 500, 1330, 685, 1099, 534, [['Cabin Terminal Core', 1127, 1335, 531], ['Interactions Manage', 1127, 1335, 560]]],
  ['sub', 1090, 724, 1330, 815, 1100, 770, [['Cabin Terminal', 1130, 1287, 768], ['Airline-Specific Int.', 1130, 1327, 797]]]
];
const sharedLinks = [
  [[516, 131], [583, 131], [583, 425], [583, 470, 610], [583, 523], [672, 523]],
  [[483, 451], [672, 451]], [[483, 562], [672, 562]],
  [[483, 601], [615, 601], [615, 669], [615, 715, 642], [615, 749], [672, 749]],
  [[483, 693], [672, 693]], [[483, 732], [535, 732], [535, 825], [672, 825]], [[483, 881], [672, 881]]
];
const sharedPins = [
  [516, 131, 1], [483, 451, 1], [672, 451, 1], [672, 525, 1], [483, 564, 1], [672, 564, 1], [672, 693, 1], [483, 693, 1],
  [483, 733, 1], [672, 825, 1], [412, 890, 1], [690, 185, 1], [483, 601], [935, 185], [672, 751], [672, 876], [483, 883], [940, 451], [940, 601]
];
const sharedLabels = [
  [489, 111, [['Streaming Protoc', 519, 705, 122]]],
  [486, 414, [['Medi', 519, 566, 411], ['a D...', 519, 570, 440]]],
  [509, 541, [['Commands', 541, 655, 553]]],
  [470, 583, [['Service Managemer', 502, 705, 595]]],
  [483, 654, [['Streamin', 516, 609, 651], ['g Prot...', 519, 600, 681]]],
  [476, 766, [['Strea...', 506, 580, 779]]],
  [460, 861, [['Service Managemer', 489, 695, 872]]]
];

function drawNodes(d, list) {
  for (const [k, x, y, r, b, ix, cy, lines] of list) {
    d.box(k, x, y, r, b);
    d.title(I, ix, cy, lines);
  }
}

// Target diagram before the layout is pasted
const t = logical(document.getElementById('target'), 1240, 180);
t.box('white', 88, 57, 1411, 1031);
t.title(I, 682, 78, [['IFE System', 711, 825, 88]]);
drawNodes(t, shared);
drawNodes(t, terminal);
t.box('actor', 40, 1051, 249, 1969);
t.title(A, 81, 1071, [['Passenger', 110, 215, 1082]], '');
t.box('actor', 268, 1096, 1198, 1276);
t.title(A, 681, 1117, [['Aircraft', 714, 790, 1127]], '');
t.box('actor', 1231, 1069, 1477, 1988);
t.title(A, 1283, 1090, [['Cabin Crew', 1315, 1430, 1101]], '');
t.box('actor', 301, 1407, 1231, 1562);
t.title(A, 673, 1427, [['Ground Operato', 701, 868, 1438]], '');
[...sharedLinks,
  [[940, 451], [1061, 451]], [[940, 601], [1061, 601]],
  [[412, 890], [412, 970], [1181, 970], [1181, 887]],
  [[690, 185], [814, 1099]], [[935, 185], [1058, 1099]]
].forEach(l => t.link(l));
[...sharedPins, [1180, 886, 1], [814, 1099, 1], [1061, 449], [1061, 601], [1058, 1099]].forEach(p => t.pin(...p));
[...sharedLabels,
  [934, 430, [['Media Data', 961, 1078, 440]]],
  [956, 565, [['Comman...', 989, 1098, 575]]],
  [578, 733, [['Aircraft Messages', 608, 784, 744]]],
  [1005, 796, [['Audio-Video Stream', 1037, 1243, 809]]],
  [476, 955, [['Service Managemer', 509, 711, 966]]]
].forEach(([x, y, l]) => t.title(D, x, y, l));
t.tree(1390, 1008);

// Result diagram once the layout is pasted
const resultSvg = document.getElementById('result');
const r = logical(resultSvg, 2070, 196.67);
r.box('white', 87, 56, 1019, 975);
r.title(I, 487, 77, [['IFE System', 515, 629, 89]]);
drawNodes(r, shared);
const p = logical(resultSvg, 0, 0);
const px = (x, y) => [x / K, y / V];
const actor = (x, y, x2, y2, ix, cy, s, a, b, base) => {
  p.box('actor', ...px(x, y), ...px(x2, y2));
  p.title(A, ...px(ix, cy), [[s, a / K, b / K, base / V]], '');
};
actor(2103.4, 127.7, 2459.7, 188, 2261.7, 134.7, 'Aircraft', 2274.3, 2302.9, 138.3);
actor(1947, 215.3, 2027.5, 521.7, 1963.6, 222.7, 'Passenger', 1974.2, 2014.4, 226.3);
actor(2546.8, 215.3, 2640.7, 521.7, 2566.7, 222.7, 'Cabin Crew', 2578.3, 2622.8, 226.3);
actor(2103.4, 559.3, 2459.7, 611, 2245.8, 566, 'Ground Operato', 2256.4, 2320.8, 570);
sharedLinks.forEach(l => r.link(l));
p.link([px(2312, 129.3), px(2333, 258)]);
p.link([px(2405.5, 129.3), px(2426.8, 258)]);
sharedPins.forEach(q => r.pin(...q));
p.pin(...px(2312, 129.3), 1);
p.pin(...px(2405.5, 129.3));
sharedLabels.forEach(([x, y, l]) => r.title(D, x, y, l));
p.title(D, ...px(2324.2, 140.7), [['Audio-Video Stream', 2335.3 / K, 2414.2 / K, 144.7 / V]]);
p.title(D, ...px(2314, 159.7), [['Aircraft Messages', 2325 / K, 2393.4 / K, 163.3 / V]]);
resultSvg.append(el('rect', { class: 'scroll', x: 2106, y: 511.3, width: 245, height: 7.4 }));
resultSvg.append(el('rect', { class: 'scroll-end', x: 2112.5, y: 511.3, width: 26.5, height: 7.4 }));
resultSvg.append(el('rect', { class: 'scroll-end', x: 2325, y: 511.3, width: 26, height: 7.4 }));
icon(resultSvg, 'i-tree', 2448, 514, 8, 8);
```
